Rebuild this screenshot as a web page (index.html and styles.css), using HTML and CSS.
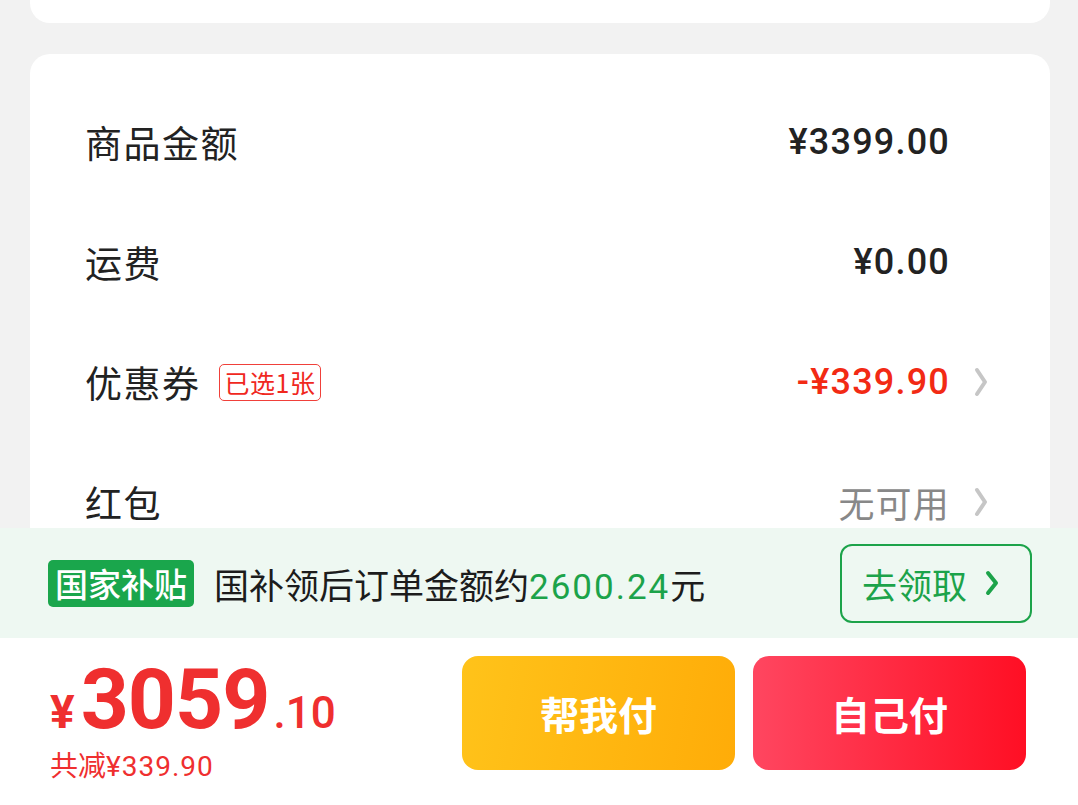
FILE: index.html
```html
<!DOCTYPE html>
<html lang="zh">
<head>
  <meta charset="UTF-8">
  <title>确认订单</title>
  <link rel="stylesheet" href="styles.css">
</head>
<body>

<div class="page">
  <div class="content">
    <div class="card card-top"></div>

    <div class="card card-price">
      <div class="row">
        <span class="label">商品金额</span>
        <span class="value">¥3399.00</span>
        <span class="arrow-slot"></span>
      </div>
      <div class="row">
        <span class="label">运费</span>
        <span class="value">¥0.00</span>
        <span class="arrow-slot"></span>
      </div>
      <div class="row">
        <span class="label">优惠券</span>
        <span class="tag">已选1张</span>
        <span class="value red">-¥339.90</span>
        <span class="arrow-slot">
          <svg width="14" height="30" viewBox="0 0 14 30"><polyline points="3,3 11,15 3,27" fill="none" stroke="#c6c6c6" stroke-width="4" stroke-linecap="round" stroke-linejoin="round"/></svg>
        </span>
      </div>
      <div class="row">
        <span class="label">红包</span>
        <span class="value gray">无可用</span>
        <span class="arrow-slot">
          <svg width="14" height="30" viewBox="0 0 14 30"><polyline points="3,3 11,15 3,27" fill="none" stroke="#c6c6c6" stroke-width="4" stroke-linecap="round" stroke-linejoin="round"/></svg>
        </span>
      </div>
    </div>
  </div>

  <div class="subsidy">
    <span class="subsidy-badge">国家补贴</span>
    <span class="subsidy-text">国补领后订单金额约<em>2600.24</em>元</span>
    <button class="claim">去领取
      <svg width="14" height="26" viewBox="0 0 14 26"><polyline points="3,3 11,13 3,23" fill="none" stroke="#1ca34a" stroke-width="4" stroke-linecap="round" stroke-linejoin="round"/></svg>
    </button>
  </div>

  <div class="paybar">
    <div class="total">
      <div class="total-main"><span class="yen">¥</span><span class="int">3059</span><span class="dec">.10</span></div>
      <div class="saved">共减<span class="num">¥339.90</span></div>
    </div>
    <button class="pay pay-help">帮我付</button>
    <button class="pay pay-self">自己付</button>
  </div>
</div>

</body>
</html>
```

FILE: styles.css
```css
body {
  margin: 0;
  background: #f2f2f2;
  font-family: "Noto Sans CJK SC", "Noto Sans", sans-serif;
  color: #222;
}
.page {
  height: 805px;
  display: flex;
  flex-direction: column;
  overflow: hidden;
}
.content {
  flex: none;
  height: 528px;
  overflow: hidden;
  padding: 0 28px 0 30px;
}
.card {
  background: #fff;
  border-radius: 20px;
}
.card-top {
  height: 23px;
  border-radius: 0 0 20px 20px;
}
.card-price {
  margin-top: 31px;
  padding: 28px 62px 0 55px;
  height: 600px;
}
.row {
  height: 120px;
  display: flex;
  align-items: center;
}
.label {
  font-size: 37px;
  color: #222;
  letter-spacing: 1.5px;
}
.tag {
  margin-left: 18px;
  padding: 0 5px;
  height: 35px;
  line-height: 35px;
  border: 1px solid #f0403a;
  border-radius: 5px;
  color: #f0281e;
  font-size: 25px;
  letter-spacing: 0.5px;
}
.value {
  margin-left: auto;
  font-family: Roboto, "Noto Sans CJK SC", sans-serif;
  font-weight: 500;
  font-size: 36px;
  color: #222;
  letter-spacing: 1.2px;
}
.value.red {
  color: #f22a14;
}
.value.gray {
  font-family: "Noto Sans CJK SC", sans-serif;
  font-weight: 400;
  font-size: 36px;
  color: #888;
}
.arrow-slot {
  width: 38px;
  display: flex;
  justify-content: flex-end;
  align-items: center;
}
.subsidy {
  height: 110px;
  flex-shrink: 0;
  background: #eef8f2;
  display: flex;
  align-items: center;
  padding: 0 46px 0 48px;
}
.subsidy-badge {
  background: #1aa64c;
  color: #fff;
  font-size: 33px;
  font-weight: 500;
  height: 47px;
  line-height: 47px;
  padding: 0 7px;
  border-radius: 5px;
}
.subsidy-text {
  margin-left: 20px;
  font-size: 35px;
  color: #1c1c1c;
}
.subsidy-text em {
  font-style: normal;
  font-family: Roboto, sans-serif;
  color: #1ca34a;
  letter-spacing: 2px;
}
.claim {
  margin-left: auto;
  width: 192px;
  height: 79px;
  border: 2px solid #1ca34a;
  border-radius: 12px;
  background: transparent;
  color: #1ca34a;
  font-family: "Noto Sans CJK SC", sans-serif;
  font-size: 35px;
  display: flex;
  align-items: center;
  gap: 18px;
  padding: 0 0 0 20px;
}
.paybar {
  flex: 1;
  background: #fff;
  display: flex;
  align-items: center;
  padding: 0 52px 18px 50px;
}
.total {
  flex: 1;
  margin-top: 16px;
  color: #ef2f2f;
}
.total-main {
  font-family: Roboto, sans-serif;
  font-weight: 700;
  line-height: 1;
  display: flex;
  align-items: baseline;
}
.yen {
  font-size: 46px;
  font-weight: 700;
  margin-right: 6px;
}
.int {
  font-size: 84px;
  letter-spacing: -1px;
}
.dec {
  font-size: 44px;
  font-weight: 500;
  margin-left: 4px;
}
.saved {
  margin-top: 2px;
  font-size: 28px;
  font-family: "Noto Sans CJK SC", sans-serif;
}
.saved .num {
  font-family: Roboto, sans-serif;
  letter-spacing: 1px;
}
.pay {
  width: 273px;
  height: 114px;
  border: none;
  border-radius: 16px;
  color: #fff;
  font-family: "Noto Sans CJK SC", sans-serif;
  font-size: 39px;
  font-weight: 700;
}
.pay-help {
  background: linear-gradient(100deg, #ffc31a, #ffac08);
}
.pay-self {
  margin-left: 18px;
  background: linear-gradient(90deg, #ff4660, #ff0f24);
}
```
